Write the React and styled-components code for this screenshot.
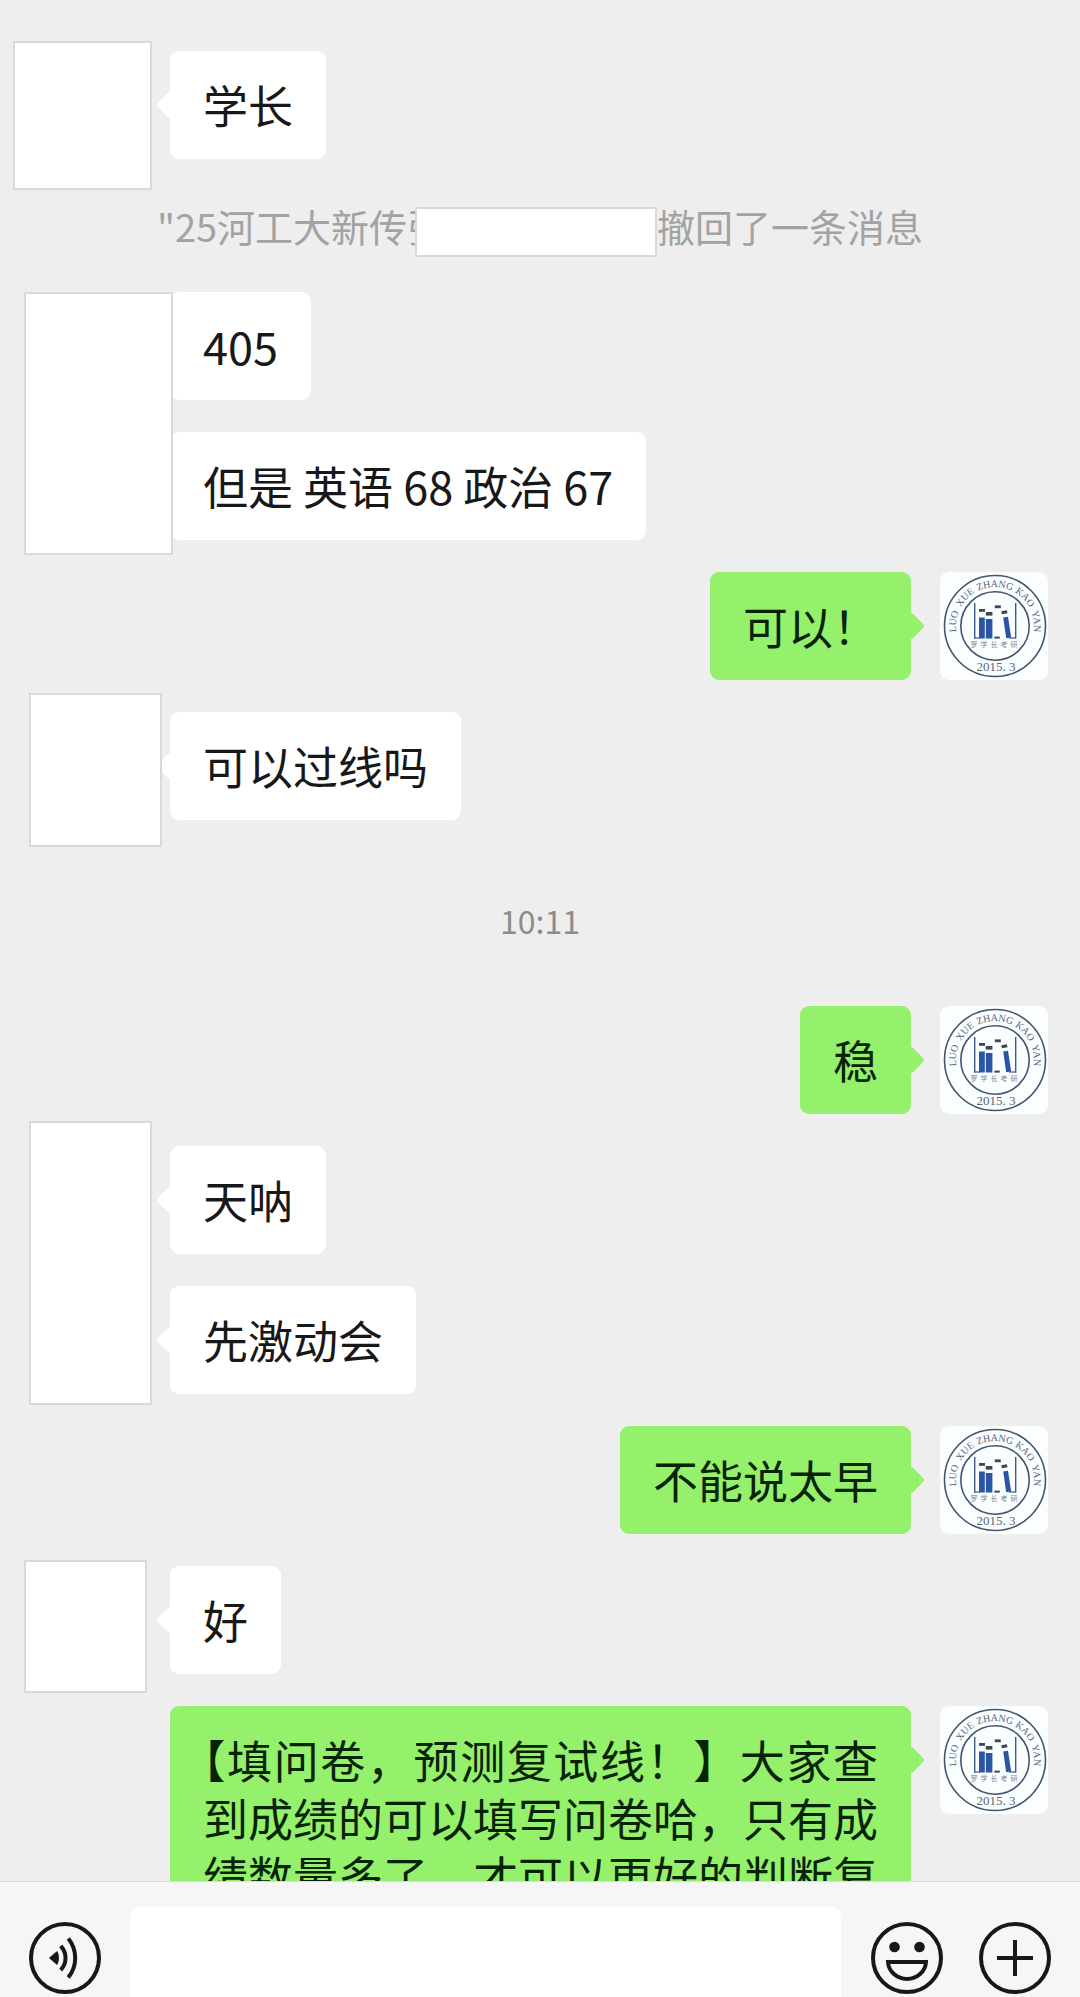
import React from "react";
import styled, { createGlobalStyle, css } from "styled-components";

const GlobalStyle = createGlobalStyle`
  * {
    box-sizing: border-box;
  }

  body {
    margin: 0;
    background: #eeeeee;
    font-family: "Noto Sans CJK SC", "Noto Sans", sans-serif;
  }
`;

const Screen = styled.div`
  display: flex;
  flex-direction: column;
  height: 100vh;
  overflow: hidden;
`;

const Chat = styled.main`
  flex: 1;
  min-height: 0;
  overflow: hidden;
  display: flex;
  flex-direction: column;
  gap: 32px;
  padding-top: 51px;
  background: #eeeeee;

  > * {
    flex-shrink: 0;
  }
`;

const Group = styled.section`
  position: relative;
  display: flex;
  flex-direction: column;
  align-items: ${(props) => (props.$mine ? "flex-end" : "flex-start")};
  gap: 32px;
  padding: 0 32px 0 170px;
`;

const MineRow = styled.div`
  display: flex;
  align-items: flex-start;
  gap: 29px;
`;

const Bubble = styled.p`
  position: relative;
  margin: 0;
  padding: 25px 33px;
  border-radius: 9px;
  background: #ffffff;
  color: #181818;
  font-size: 45px;
  line-height: 58px;
  text-align: justify;
  text-spacing-trim: trim-start;

  &::before {
    content: "";
    position: absolute;
    top: 44px;
    left: -10px;
    width: 20px;
    height: 20px;
    border-radius: 3px;
    background: inherit;
    transform: rotate(45deg);
  }

  ${(props) =>
    props.$mine &&
    css`
      background: #95f06b;
      color: #062305;

      &::before {
        left: auto;
        right: -10px;
      }
    `}
`;

/* white block that hides the sender's picture */
const Cover = styled.div`
  position: absolute;
  z-index: 1;
  top: ${(props) => props.$top}px;
  left: ${(props) => props.$left}px;
  width: ${(props) => props.$width}px;
  height: ${(props) => props.$height}px;
  border: 2px solid #d9d9d9;
  background: #ffffff;
`;

const Notice = styled.div`
  display: flex;
  justify-content: center;
  color: #a3a3a3;
  font-size: 38px;
  line-height: 69px;
  white-space: nowrap;
`;

const NameCover = styled.span`
  align-self: flex-end;
  width: 242px;
  height: 50px;
  margin: 0 0 3px -30px;
  border: 2px solid #d9d9d9;
  background: #ffffff;
`;

const Time = styled.time`
  padding-top: 14px;
  color: #8c8c8c;
  font-size: 32px;
  line-height: 108px;
  text-align: center;
`;

const Avatar = styled.svg`
  flex-shrink: 0;
  width: 108px;
  height: 108px;
  border-radius: 9px;
  background: #fbfefe;
`;

const Footer = styled.footer`
  flex-shrink: 0;
  display: flex;
  align-items: flex-start;
  height: 116px;
  padding: 25px 29px 0;
  overflow: hidden;
  border-top: 1px solid #dcdcdc;
  background: #f6f6f6;
`;

const MessageInput = styled.input`
  flex: 1;
  min-width: 0;
  height: 102px;
  margin: 0 30px 0 29px;
  padding: 0 24px;
  border: 0;
  border-radius: 9px;
  outline: 0;
  background: #ffffff;
  font-family: inherit;
  font-size: 45px;
`;

const IconButton = styled.button`
  width: 72px;
  height: 72px;
  margin-top: 15px;
  padding: 0;
  border: 0;
  background: none;
  color: #181818;
  cursor: pointer;

  & + & {
    margin-left: 36px;
  }

  svg {
    display: block;
    width: 72px;
    height: 72px;
  }
`;

const ringWords = [
  { text: "LUO", offset: "12%" },
  { text: "XUE", offset: "29%" },
  { text: "ZHANG", offset: "50%" },
  { text: "KAO", offset: "71%" },
  { text: "YAN", offset: "88%" },
];

const SchoolAvatar = ({ id }) => (
  <Avatar viewBox="0 0 108 108" role="img" aria-label="头像">
    <path id={id} d="M18.35 67.34A39 39 0 1 1 91.65 67.34" fill="none" />
    <g fill="none" stroke="#44556f" strokeWidth="1.6">
      <circle cx="55" cy="54" r="50.5" />
      <circle cx="55" cy="54" r="34.2" />
    </g>
    <g fill="#56647c" fontFamily="Liberation Serif, serif" textAnchor="middle">
      {ringWords.map((word) => (
        <text key={word.text} fontSize="10">
          <textPath href={`#${id}`} startOffset={word.offset}>
            {word.text}
          </textPath>
        </text>
      ))}
      <text x="56" y="99" fontSize="13">
        2015. 3
      </text>
    </g>
    <g fill="#3c5a8c">
      <rect x="34" y="31" width="1.4" height="35.5" />
      <rect x="75" y="31" width="1.4" height="35.5" />
      <rect x="34" y="65.4" width="6" height="1.2" />
      <rect x="69" y="65.4" width="7" height="1.2" />
    </g>
    <g fill="#3c4757">
      <rect x="39" y="37" width="6" height="2.8" />
      <rect x="45.8" y="40" width="6.6" height="3.6" />
      <rect x="54.8" y="33.4" width="6" height="2.8" />
      <path d="M61.3 39.2l5.6-1 .6 3-5.6 1z" />
      <rect x="54.4" y="64.6" width="5.4" height="2" />
    </g>
    <g fill="#2a55a5">
      <rect x="39" y="45.5" width="5.8" height="21" />
      <rect x="45.8" y="47" width="6.6" height="19.5" />
      <path d="M63.2 45.4l4.8-.7 3.2 20.8-5 .8z" />
    </g>
    <text
      x="34 44 54 64 74"
      y="75"
      fill="#7c8796"
      fontSize="7"
      textAnchor="middle"
      fontFamily="Noto Sans CJK SC, sans-serif"
    >
      罗学长考研
    </text>
  </Avatar>
);

const VoiceIcon = () => (
  <svg viewBox="0 0 72 72" fill="none" stroke="currentColor" strokeWidth="4">
    <circle cx="36" cy="36" r="34" />
    <path d="M21 36l7-6q2.4 6 0 12z" fill="currentColor" strokeWidth="1.5" strokeLinejoin="round" />
    <path d="M31.7 24a17.3 17.3 0 0 1 0 24" />
    <path d="M39.3 16.5a31 31 0 0 1 0 39" />
  </svg>
);

const SmileIcon = () => (
  <svg viewBox="0 0 72 72" fill="none" stroke="currentColor" strokeWidth="4">
    <circle cx="36" cy="36" r="34" />
    <circle cx="23.5" cy="25" r="5.3" fill="currentColor" stroke="none" />
    <circle cx="48.5" cy="25" r="5.3" fill="currentColor" stroke="none" />
    <path d="M17 40h38c-.5 9.5-9 17-19 17s-18.5-7.5-19-17z" />
  </svg>
);

const PlusIcon = () => (
  <svg viewBox="0 0 72 72" fill="none" stroke="currentColor" strokeWidth="4">
    <circle cx="36" cy="36" r="34" />
    <path d="M18 36h36M36 18v36" />
  </svg>
);

const Theirs = ({ cover, messages }) => (
  <Group>
    <Cover $left={cover[0]} $top={cover[1]} $width={cover[2]} $height={cover[3]} />
    {messages.map((text) => (
      <Bubble key={text}>{text}</Bubble>
    ))}
  </Group>
);

const Mine = ({ id, text }) => (
  <Group $mine>
    <MineRow>
      <Bubble $mine>{text}</Bubble>
      <SchoolAvatar id={id} />
    </MineRow>
  </Group>
);

const App = () => {
  return (
    <Screen>
      <GlobalStyle />
      <Chat>
        <Theirs cover={[13, -10, 139, 149]} messages={["学长"]} />
        <Notice>
          <span>"25河工大新传张</span>
          <NameCover />
          <span>撤回了一条消息</span>
        </Notice>
        <Theirs cover={[24, 0, 149, 263]} messages={["405", "但是 英语 68 政治 67"]} />
        <Mine id="ring-1" text="可以！" />
        <Theirs cover={[29, -19, 133, 154]} messages={["可以过线吗"]} />
        <Time>10:11</Time>
        <Mine id="ring-2" text="稳" />
        <Theirs cover={[29, -25, 123, 284]} messages={["天呐", "先激动会"]} />
        <Mine id="ring-3" text="不能说太早" />
        <Theirs cover={[24, -6, 123, 133]} messages={["好"]} />
        <Mine
          id="ring-4"
          text="【填问卷，预测复试线！】大家查到成绩的可以填写问卷哈，只有成绩数量多了，才可以更好的判断复"
        />
      </Chat>
      <Footer>
        <IconButton type="button" aria-label="语音">
          <VoiceIcon />
        </IconButton>
        <MessageInput type="text" aria-label="输入消息" />
        <IconButton type="button" aria-label="表情">
          <SmileIcon />
        </IconButton>
        <IconButton type="button" aria-label="更多">
          <PlusIcon />
        </IconButton>
      </Footer>
    </Screen>
  );
};

export default App;
